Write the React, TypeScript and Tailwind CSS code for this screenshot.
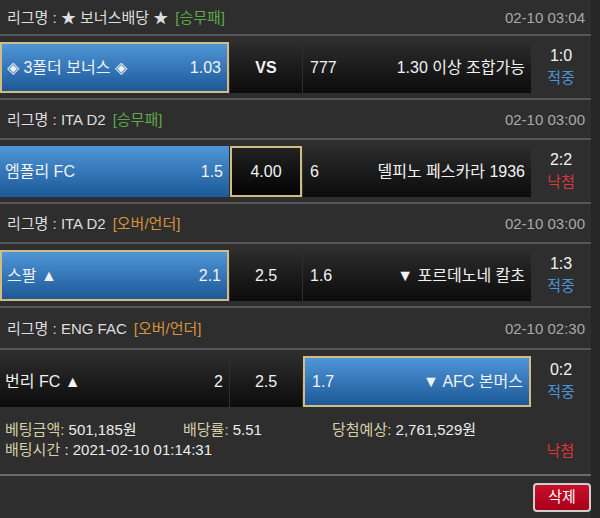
import React from "react";

type Pick = "home" | "draw" | "away";

interface Match {
  league: string;
  tag: string;
  tagColor: string;
  date: string;
  home: string;
  homeOdds: string;
  mid: string;
  midBold?: boolean;
  awayOdds: string;
  away: string;
  pick: Pick;
  score: string;
  result: string;
  resultColor: string;
}

const matches: Match[] = [
  {
    league: "★ 보너스배당 ★",
    tag: "[승무패]",
    tagColor: "text-[#5fa84a]",
    date: "02-10 03:04",
    home: "◈ 3폴더 보너스 ◈",
    homeOdds: "1.03",
    mid: "VS",
    midBold: true,
    awayOdds: "777",
    away: "1.30 이상 조합가능",
    pick: "home",
    score: "1:0",
    result: "적중",
    resultColor: "text-[#4d93d8]",
  },
  {
    league: "ITA D2",
    tag: "[승무패]",
    tagColor: "text-[#5fa84a]",
    date: "02-10 03:00",
    home: "엠폴리 FC",
    homeOdds: "1.5",
    mid: "4.00",
    awayOdds: "6",
    away: "델피노 페스카라 1936",
    pick: "draw",
    score: "2:2",
    result: "낙첨",
    resultColor: "text-[#d9393b]",
  },
  {
    league: "ITA D2",
    tag: "[오버/언더]",
    tagColor: "text-[#d8923c]",
    date: "02-10 03:00",
    home: "스팔 ▲",
    homeOdds: "2.1",
    mid: "2.5",
    awayOdds: "1.6",
    away: "▼ 포르데노네 칼초",
    pick: "home",
    score: "1:3",
    result: "적중",
    resultColor: "text-[#4d93d8]",
  },
  {
    league: "ENG FAC",
    tag: "[오버/언더]",
    tagColor: "text-[#d8923c]",
    date: "02-10 02:30",
    home: "번리 FC ▲",
    homeOdds: "2",
    mid: "2.5",
    awayOdds: "1.7",
    away: "▼ AFC 본머스",
    pick: "away",
    score: "0:2",
    result: "적중",
    resultColor: "text-[#4d93d8]",
  },
];

// header heights per block (the first one is cut at the top of the page)
const headerH = ["h-[36px]", "h-[40px]", "h-[40px]", "h-[42px]"];

const picked =
  "bg-gradient-to-b from-[#4f96d8] to-[#1c5998] border-2 border-[#d2bc84]";
const blue = "bg-gradient-to-b from-[#4f96d8] to-[#1c5998]";
const dark = "bg-gradient-to-b from-[#2c2c2c] to-[#0c0c0c]";

function MatchBlock({ m, index, last }: { m: Match; index: number; last: boolean }) {
  return (
    <div>
      {/* League header */}
      <div
        className={
          "flex items-center justify-between pl-[7px] pr-[6px] pt-[2px] text-[15px] border-b-2 border-[#565656] " +
          headerH[index]
        }
      >
        <div className="flex items-center gap-[7px]">
          <span className="text-[#dedede]">리그명 : {m.league}</span>
          <span className={m.tagColor}>{m.tag}</span>
        </div>
        <span className="text-[#a9a9a9]">{m.date}</span>
      </div>

      {/* Odds row */}
      <div
        className={
          "flex items-center pt-[6px] " +
          (last ? "pb-[1px]" : "pb-[5px] border-b-2 border-[#565656]")
        }
      >
        <div
          className={
            "w-[229px] h-[51px] flex items-center justify-between pl-[5px] pr-[6px] text-[16px] text-[#f2f2f2] " +
            (m.pick === "home" ? picked : m.pick === "away" ? dark : blue)
          }
        >
          <span>{m.home}</span>
          <span>{m.homeOdds}</span>
        </div>
        <div
          className={
            "ml-[1px] w-[72px] h-[51px] flex items-center justify-center text-[16px] text-[#f2f2f2] " +
            (m.midBold ? "font-bold " : "") +
            (m.pick === "draw" ? "bg-gradient-to-b from-[#222] to-[#050505] border-2 border-[#d2bc84]" : dark)
          }
        >
          {m.mid}
        </div>
        <div
          className={
            "ml-[1px] w-[228px] h-[51px] flex items-center justify-between pl-[7px] pr-[6px] text-[16px] text-[#f2f2f2] " +
            (m.pick === "away" ? picked : dark)
          }
        >
          <span>{m.awayOdds}</span>
          <span>{m.away}</span>
        </div>
        <div className="flex-1 flex flex-col items-center leading-[22px] -mt-[1px]">
          <span className="text-[16px] text-[#f2f2f2]">{m.score}</span>
          <span className={"text-[15px] " + m.resultColor}>{m.result}</span>
        </div>
      </div>
    </div>
  );
}

export default function App() {
  return (
    <div className="flex w-[600px] h-[518px] font-['Liberation_Sans','Noto_Sans_CJK_KR',sans-serif]">
      <div className="w-[591px] bg-[#2e2e2e] flex flex-col">
        {matches.map((m, i) => (
          <MatchBlock key={i} m={m} index={i} last={i === matches.length - 1} />
        ))}

        {/* Bet summary */}
        <div className="h-[68px] pl-[5px] pt-[12px] border-b-2 border-[#6a6a6a] text-[15px] leading-[20px]">
          <div className="flex">
            <span className="w-[178px]">
              <span className="text-[#d8cfa6]">베팅금액: </span>
              <span className="text-[#ededed]">501,185원</span>
            </span>
            <span className="w-[149px]">
              <span className="text-[#d8cfa6]">배당률: </span>
              <span className="text-[#ededed]">5.51</span>
            </span>
            <span>
              <span className="text-[#d8cfa6]">당첨예상: </span>
              <span className="text-[#ededed]">2,761,529원</span>
            </span>
          </div>
          <div className="flex justify-between pr-[17px]">
            <span>
              <span className="text-[#d8cfa6]">배팅시간 </span>
              <span className="text-[#ededed]">: 2021-02-10 01:14:31</span>
            </span>
            <span className="text-[#e0333a] pt-[1px]">낙첨</span>
          </div>
        </div>

        <div className="flex-1 flex justify-end items-start pt-[7px]">
          <button className="w-[58px] h-[29px] rounded-[4px] border-2 border-[#cfcfcf] bg-gradient-to-b from-[#c8102a] to-[#a8001a] text-[15px] text-white">
            삭제
          </button>
        </div>
      </div>
      <div className="flex-1 bg-[#262626]" />
    </div>
  );
}
